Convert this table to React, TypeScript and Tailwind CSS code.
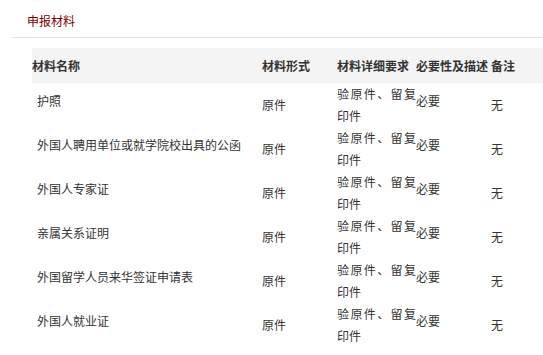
const materials = [
  '护照',
  '外国人聘用单位或就学院校出具的公函',
  '外国人专家证',
  '亲属关系证明',
  '外国留学人员来华签证申请表',
  '外国人就业证',
];

export default function App() {
  return (
    <div
      className="w-[543px] h-[355px] bg-white text-[12px] text-[#333] overflow-hidden"
      style={{ fontFamily: '"Microsoft YaHei", "Noto Sans CJK SC", sans-serif' }}
    >
      <div className="ml-3 h-[38px] border-b border-[#e4e4e4] pt-[13px] pl-[15px]">
        <span className="block leading-[15px] text-[#840000]">申报材料</span>
      </div>

      <table className="ml-[32px] mt-[10px] w-[511px] table-fixed border-collapse">
        <colgroup>
          <col className="w-[230px]" />
          <col className="w-[75px]" />
          <col className="w-[79px]" />
          <col className="w-[75px]" />
          <col className="w-[52px]" />
        </colgroup>
        <thead>
          <tr className="h-[35px] bg-[#f4f4f4] font-bold text-left">
            <th className="p-0 font-bold">材料名称</th>
            <th className="p-0 font-bold">材料形式</th>
            <th className="p-0 font-bold whitespace-nowrap">材料详细要求</th>
            <th className="p-0 font-bold whitespace-nowrap">必要性及描述</th>
            <th className="p-0 font-bold">备注</th>
          </tr>
        </thead>
        <tbody>
          {materials.map((name) => (
            <tr key={name} className="h-[44px] leading-[22px]">
              <td className="p-0 pl-[5px] pb-[9px] align-middle whitespace-nowrap">{name}</td>
              <td className="p-0 align-middle">原件</td>
              <td className="p-0 align-middle text-justify">验原件、留复印件</td>
              <td className="p-0 pb-[8px] align-middle">必要</td>
              <td className="p-0 align-middle">无</td>
            </tr>
          ))}
        </tbody>
      </table>
    </div>
  );
}
